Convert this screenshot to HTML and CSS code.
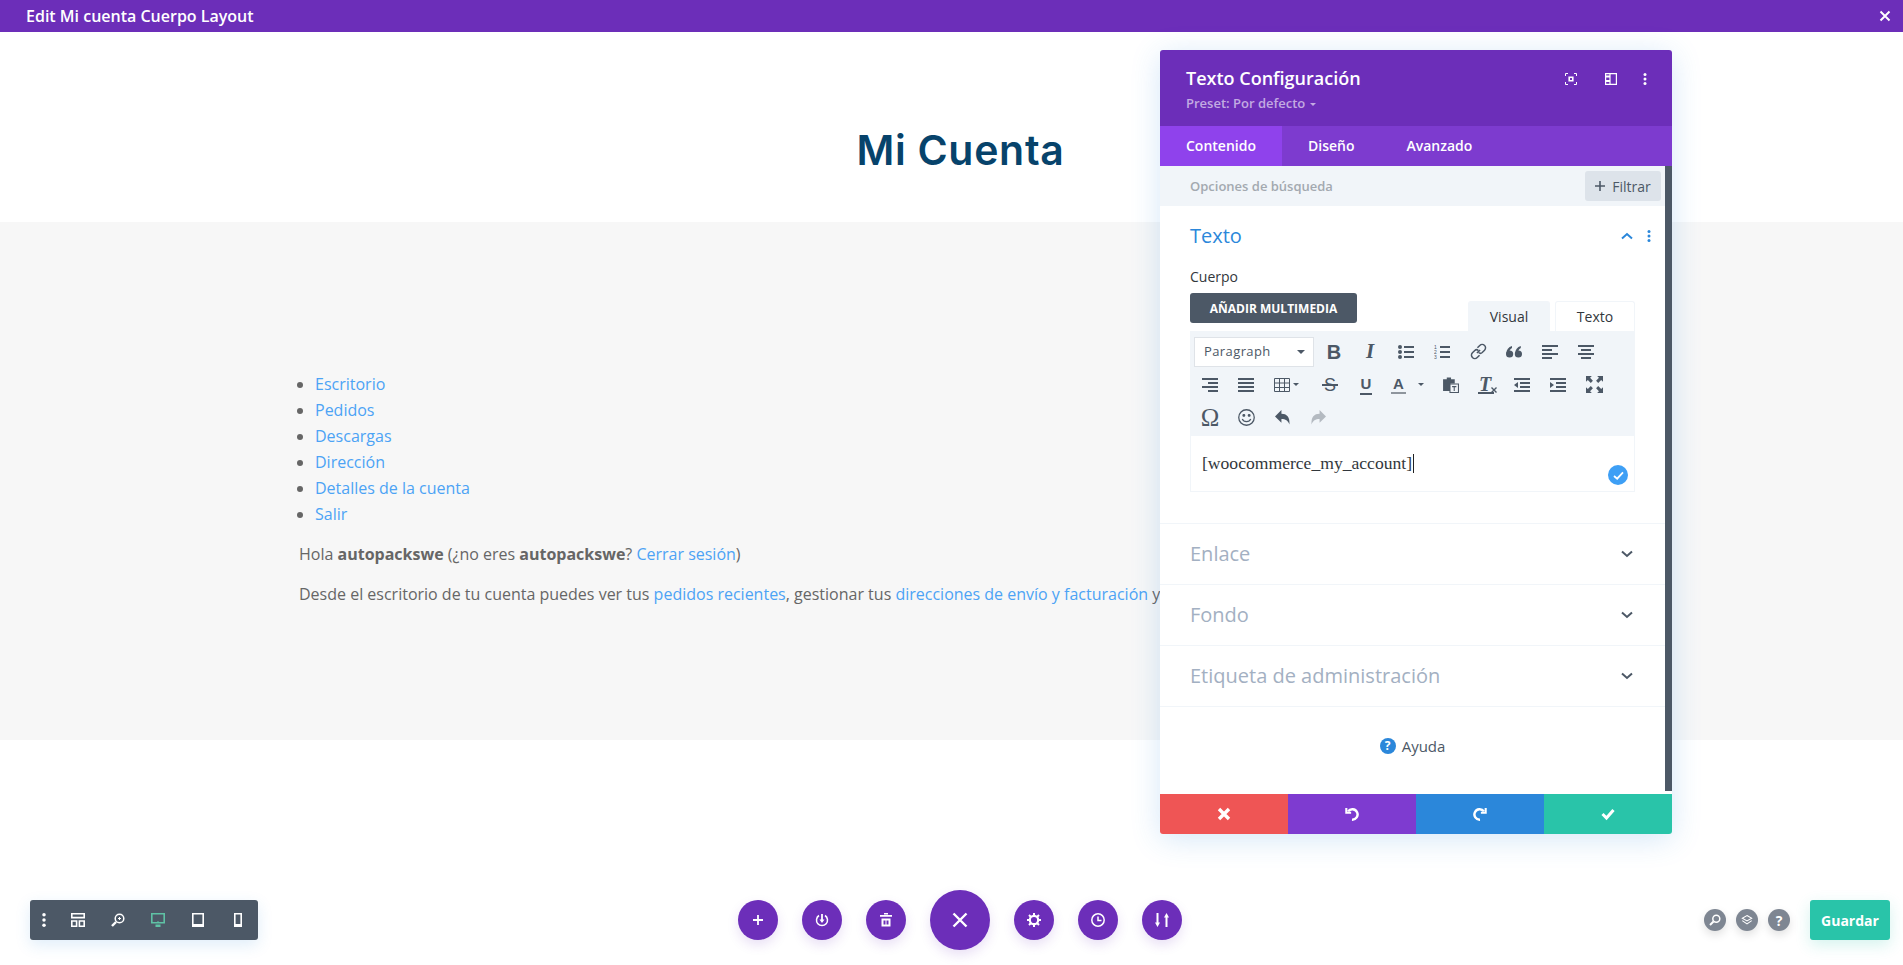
FILE: index.html
```html
<!doctype html>
<html lang="es">
<head>
<meta charset="utf-8">
<title>Edit Mi cuenta Cuerpo Layout</title>
<link rel="stylesheet" href="styles.css">
</head>
<body>

<svg class="sprite" xmlns="http://www.w3.org/2000/svg">
	<symbol id="i-dots" viewBox="0 0 16 16"><circle cx="8" cy="2" r="2"/><circle cx="8" cy="8" r="2"/><circle cx="8" cy="14" r="2"/></symbol>
	<symbol id="i-chev" viewBox="0 0 12 8"><path d="M1 1.500l5 4.500 5-4.500" fill="none" stroke="currentColor" stroke-width="2"/></symbol>
	<symbol id="i-close" viewBox="0 0 16 16"><path d="M2 2l12 12M14 2L2 14" fill="none" stroke="currentColor" stroke-width="2.600"/></symbol>
</svg>

<header class="topbar">
	<span class="topbar-title">Edit Mi cuenta Cuerpo Layout</span>
	<svg class="topbar-close"><use href="#i-close"/></svg>
</header>

<section class="hero"><h1>Mi Cuenta</h1></section>

<section class="account">
	<ul class="account-nav">
		<li><a href="#">Escritorio</a></li>
		<li><a href="#">Pedidos</a></li>
		<li><a href="#">Descargas</a></li>
		<li><a href="#">Dirección</a></li>
		<li><a href="#">Detalles de la cuenta</a></li>
		<li><a href="#">Salir</a></li>
	</ul>
	<p>Hola <b>autopackswe</b> (¿no eres <b>autopackswe</b>? <a href="#">Cerrar sesión</a>)</p>
	<p>Desde el escritorio de tu cuenta puedes ver tus <a href="#">pedidos recientes</a>, gestionar tus <a href="#">direcciones de envío y facturación</a> y</p>
</section>

<!-- settings modal -->
<div class="modal">
	<div class="modal-head">
		<div>
			<div class="modal-title">Texto Configuración</div>
			<div class="modal-preset">Preset: Por defecto <i class="caret caret-light"></i></div>
		</div>
		<div class="modal-tools">
			<svg viewBox="0 0 12 12"><path d="M.5 3V.5H3M9 .5h2.500V3M11.500 9v2.500H9M3 11.500H.5V9" fill="none" stroke="#fff" stroke-width="1"/><path d="M4.200 4.200h3.600v3.600H4.200z" fill="none" stroke="#fff" stroke-width="1.600"/></svg>
			<svg viewBox="0 0 12 12"><path d="M.6.600h10.800v10.800H.6zM5 .6v10.800" fill="none" stroke="#fff" stroke-width="1.200"/><path d="M1 2.500h4v2H1zM1 7h4v2H1z" fill="#fff"/></svg>
			<svg class="tool-dots" fill="#fff"><use href="#i-dots"/></svg>
		</div>
	</div>

	<div class="modal-tabs">
		<span class="tab active">Contenido</span>
		<span class="tab">Diseño</span>
		<span class="tab">Avanzado</span>
	</div>

	<div class="modal-search">
		<span class="search-label">Opciones de búsqueda</span>
		<span class="filter"><svg viewBox="0 0 10 10"><path d="M5 0v10M0 5h10" stroke="#4c5866" stroke-width="1.600"/></svg> Filtrar</span>
	</div>

	<div class="modal-body">
		<div class="group open">
			<div class="group-head">
				<span class="group-name">Texto</span>
				<svg class="chev up"><use href="#i-chev"/></svg>
				<svg class="group-dots"><use href="#i-dots"/></svg>
			</div>
			<div class="field-label">Cuerpo</div>
			<div class="editor-top">
				<span class="media-btn">AÑADIR MULTIMEDIA</span>
				<div class="editor-tabs">
					<span class="etab on">Visual</span>
					<span class="etab">Texto</span>
				</div>
			</div>
			<div class="toolbar">
				<span class="select">Paragraph <i class="caret"></i></span>

				<span class="tb tb-b">B</span>
				<span class="tb tb-i">I</span>
				<span class="tb"><svg viewBox="0 0 16 14"><circle cx="2" cy="2" r="2"/><circle cx="2" cy="7" r="2"/><circle cx="2" cy="12" r="2"/><path d="M6 1h10v2H6zM6 6h10v2H6zM6 11h10v2H6z"/></svg></span>
				<span class="tb"><svg viewBox="0 0 16 14"><text x="0" y="4.400" class="tiny">1</text><text x="0" y="9.200" class="tiny">2</text><text x="0" y="14" class="tiny">3</text><path d="M6 1h10v2H6zM6 6h10v2H6zM6 11h10v2H6z"/></svg></span>
				<span class="tb"><svg class="sq line" viewBox="0 0 16 16" stroke="#4c5866" stroke-width="1.400"><path d="M6.500 9.500l3-3M7 4.500l2.200-2.200a2.600 2.600 0 0 1 4.500 4.500L11.500 9a2.400 2.400 0 0 1-3.300 0M9 11.500l-2.200 2.200a2.600 2.600 0 0 1-4.500-4.500L4.500 7a2.400 2.400 0 0 1 3.300 0"/></svg></span>
				<span class="tb"><svg viewBox="0 0 16 12"><circle cx="3.600" cy="8" r="3.600"/><path d="M.4 7.500C.4 3.500 2.500 1 6 0v2C4 3 3 5 3.500 7z"/><circle cx="12.400" cy="8" r="3.600"/><path d="M9.200 7.500C9.200 3.500 11.300 1 14.800 0v2c-2 1-3 3-2.500 5z"/></svg></span>
				<span class="tb"><svg viewBox="0 0 16 14"><path d="M0 0h16v2H0zM0 4h10v2H0zM0 8h16v2H0zM0 12h10v2H0z"/></svg></span>
				<span class="tb"><svg viewBox="0 0 16 14"><path d="M0 0h16v2H0zM3 4h10v2H3zM0 8h16v2H0zM3 12h10v2H3z"/></svg></span>

				<span class="tb"><svg viewBox="0 0 16 14"><path d="M0 0h16v2H0zM6 4h10v2H6zM0 8h16v2H0zM6 12h10v2H6z"/></svg></span>
				<span class="tb"><svg viewBox="0 0 16 14"><path d="M0 0h16v2H0zM0 4h16v2H0zM0 8h16v2H0zM0 12h16v2H0z"/></svg></span>
				<span class="tb tb-wide"><svg class="line" viewBox="0 0 16 14"><path d="M.5.500h15v13H.5zM.5 5h15M.5 9.500h15M5.500.5v13M10.500.5v13" stroke="#4c5866"/></svg><i class="caret"></i></span>
				<span class="tb tb-s">S</span>
				<span class="tb tb-u">U</span>
				<span class="tb tb-wide tb-color"><span class="tb-a">A</span><i class="caret"></i></span>
				<span class="tb"><svg class="sq" viewBox="0 0 16 16"><path d="M1 3h3.500V1.500h4V3H12v4H8v7H1z"/><path d="M7.500 7.500h8v8h-8z" fill="#f1f5f9" stroke="#4c5866"/><path d="M9.500 9.500h4v1h-1.500v3.500h-1v-3.500H9.500z"/></svg></span>
				<span class="tb tb-clear"><span>T</span><svg viewBox="0 0 6 6"><path d="M.5.500l5 5M5.500.5l-5 5" fill="none" stroke="#4c5866" stroke-width="1.400"/></svg></span>
				<span class="tb"><svg viewBox="0 0 16 14"><path d="M0 0h16v2H0zM6 4h10v2H6zM6 8h10v2H6zM0 12h16v2H0zM4 4v6L0 7z"/></svg></span>
				<span class="tb"><svg viewBox="0 0 16 14"><path d="M0 0h16v2H0zM6 4h10v2H6zM6 8h10v2H6zM0 12h16v2H0zM0 4v6l4-3z"/></svg></span>
				<span class="tb"><svg class="sq" viewBox="0 0 16 16"><path d="M0 0h5.500L3.800 1.700 6.500 4.500 4.500 6.500 1.700 3.800 0 5.500zM16 0v5.500l-1.700-1.700-2.800 2.700-2-2 2.700-2.800L10.500 0zM0 16v-5.500l1.700 1.700 2.800-2.700 2 2-2.700 2.800L5.500 16zM16 16h-5.500l1.700-1.700-2.700-2.800 2-2 2.800 2.700 1.700-1.700z"/></svg></span>

				<span class="tb tb-omega">Ω</span>
				<span class="tb"><svg class="sq line" viewBox="0 0 16 16" stroke="#4c5866" stroke-width="1.200"><circle cx="8" cy="8" r="7.300"/><path d="M4 9.500c1.500 3.300 6.500 3.300 8 0"/><circle cx="5.500" cy="6" r=".8" fill="#4c5866"/><circle cx="10.500" cy="6" r=".8" fill="#4c5866"/></svg></span>
				<span class="tb"><svg class="sm" viewBox="0 0 14 14"><path d="M6 0v3.500c5 0 8 3 7.500 10C12 10 10 8.500 6 8.500V12L0 6z"/></svg></span>
				<span class="tb tb-off"><svg class="sm" viewBox="0 0 14 14"><path d="M8 0v3.500c-5 0-8 3-7.500 10C2 10 4 8.500 8 8.500V12l6-6z"/></svg></span>
			</div>
			<div class="editor-area">
				<span class="code">[woocommerce_my_account]</span><span class="cursor"></span>
				<span class="saved"><svg viewBox="0 0 12 10"><path d="M1 5.500l3.500 3L11 1.500" fill="none" stroke="#fff" stroke-width="2"/></svg></span>
			</div>
		</div>

		<div class="group">
			<span class="group-name">Enlace</span>
			<svg class="chev"><use href="#i-chev"/></svg>
		</div>
		<div class="group">
			<span class="group-name">Fondo</span>
			<svg class="chev"><use href="#i-chev"/></svg>
		</div>
		<div class="group">
			<span class="group-name">Etiqueta de administración</span>
			<svg class="chev"><use href="#i-chev"/></svg>
		</div>

		<div class="help"><span class="help-mark">?</span> Ayuda</div>
	</div>
	<div class="scrollbar"></div>

	<div class="modal-foot">
		<span class="fbtn f-red"><svg viewBox="0 0 14 14"><path d="M2 2l10 10M12 2L2 12" fill="none" stroke="#fff" stroke-width="3.400"/></svg></span>
		<span class="fbtn f-purple"><svg viewBox="0 0 16 16" fill="none" stroke="#fff" stroke-width="2.800"><path d="M3.500 5A6 6 0 1 1 8 14.500"/><path d="M1.500 1v5.500H7" stroke-width="2.400"/></svg></span>
		<span class="fbtn f-blue"><svg viewBox="0 0 16 16" fill="none" stroke="#fff" stroke-width="2.800"><path d="M12.500 5A6 6 0 1 0 8 14.500"/><path d="M14.500 1v5.500H9" stroke-width="2.400"/></svg></span>
		<span class="fbtn f-green"><svg viewBox="0 0 14 12"><path d="M1.500 6l4 4L12.500 2" fill="none" stroke="#fff" stroke-width="3"/></svg></span>
	</div>
</div>

<!-- bottom left: view modes -->
<div class="views">
	<span class="view view-dots"><svg fill="#fff"><use href="#i-dots"/></svg></span>
	<span class="view"><svg viewBox="0 0 14 14"><path d="M.8.800h12.400v3.800H.8zM.8 8h4.800v5.200H.8zM8.400 8h4.800v5.200H8.400z" fill="none" stroke="#fff" stroke-width="1.600"/></svg></span>
	<span class="view"><svg viewBox="0 0 14 14"><circle cx="8.500" cy="5.500" r="4.300" fill="none" stroke="#fff" stroke-width="1.500"/><path d="M5 9l-4 4" stroke="#fff" stroke-width="2.400"/><path d="M7 5.500h3M8.500 4v3" stroke="#fff"/></svg></span>
	<span class="view"><svg viewBox="0 0 14 14"><path d="M.8.800h12.400v9H.8z" fill="none" stroke="#5fc2a5" stroke-width="1.600"/><path d="M6 8.500h2v1H6zM4.500 11.500h5V14h-5z" fill="#5fc2a5"/></svg></span>
	<span class="view"><svg viewBox="0 0 12 14"><path d="M.8.800h10.400v12.400H.8z" fill="none" stroke="#fff" stroke-width="1.600"/><path d="M1 11h10v2H1z" fill="#fff"/></svg></span>
	<span class="view"><svg class="phone" viewBox="0 0 8 14"><path d="M.8.800h6.400v12.400H.8z" fill="none" stroke="#fff" stroke-width="1.600"/><path d="M1 11h6v2H1z" fill="#fff"/></svg></span>
</div>

<!-- bottom center: page actions -->
<div class="actions">
	<span class="round"><svg class="plus" viewBox="0 0 10 10"><path d="M5 0v10M0 5h10" stroke="#fff" stroke-width="1.800"/></svg></span>
	<span class="round"><svg viewBox="0 0 14 14" fill="none" stroke="#fff" stroke-width="1.500"><path d="M4 2.500a5.500 5.500 0 1 0 6 0"/><path d="M7 1v7.500" stroke-width="1.800"/><path d="M4.500 6.500L7 10l2.500-3.500z" fill="#fff" stroke="none"/></svg></span>
	<span class="round"><svg viewBox="0 0 12 14"><path d="M0 2h12v1.800H0zM4 0h4v1.500H4z" fill="#fff"/><path d="M1.500 5.500h9v8h-9z" fill="#fff"/><path d="M3.500 7.500h2v4h-2zM6.500 7.500h2v4h-2z" fill="#6c2eb9"/></svg></span>
	<span class="round round-big"><svg viewBox="0 0 16 16"><path d="M1.500 1.500l13 13M14.500 1.500l-13 13" stroke="#fff" stroke-width="2.400"/></svg></span>
	<span class="round"><svg viewBox="0 0 14 14"><circle cx="7" cy="7" r="4.200" fill="none" stroke="#fff" stroke-width="2.200"/><path d="M7 0v3M7 11v3M0 7h3M11 7h3M2 2l2 2M10 10l2 2M12 2l-2 2M4 10l-2 2" stroke="#fff" stroke-width="2"/></svg></span>
	<span class="round"><svg viewBox="0 0 14 14" fill="none" stroke="#fff" stroke-width="1.500"><circle cx="7" cy="7" r="6.200"/><path d="M7 3.500V7.500h3.500"/></svg></span>
	<span class="round"><svg viewBox="0 0 14 14"><path d="M2.500 10V0M11.500 14V4" stroke="#fff" stroke-width="2"/><path d="M0 9.500h5L2.500 14zM9 4.500h5L11.500 0z" fill="#fff"/></svg></span>
</div>

<!-- bottom right -->
<div class="savebar">
	<span class="mini"><svg viewBox="0 0 12 12"><circle cx="7.300" cy="4.700" r="3.500" fill="none" stroke="#fff" stroke-width="1.500"/><path d="M4.500 7.500L1 11" stroke="#fff" stroke-width="2"/></svg></span>
	<span class="mini"><svg viewBox="0 0 14 12" fill="none" stroke="#fff" stroke-width="1.200"><path d="M7 .8l5.500 3.200L7 7.200 1.500 4z"/><path d="M1.500 6.800L7 10.500l5.500-3.700"/></svg></span>
	<span class="mini mini-q">?</span>
	<span class="save">Guardar</span>
</div>

</body>
</html>
```

FILE: styles.css
```css
* { box-sizing: border-box; }

body { background: #fff; color: #666; font: 14px/1.5 "Open Sans", sans-serif; height: 965px; margin: 0; overflow: hidden; position: relative; }
a { color: #4ca3f5; text-decoration: none; }
svg { display: block; }

.sprite { height: 0; position: absolute; width: 0; }

.topbar { align-items: center; background: #6c2eb9; color: #fff; display: flex; height: 32px; justify-content: space-between; padding: 0 12px 0 26px; }
.topbar-title { font-size: 16px; font-weight: 600; }
.topbar-close { color: #fff; height: 12px; width: 12px; }

.hero { align-items: center; display: flex; height: 190px; justify-content: center; padding: 46px 0 0 18px; }
.hero h1 { color: #07436b; font: 600 41px/1 Inter, "Open Sans", sans-serif; letter-spacing: .7px; margin: 0; }

.account { background: #f7f7f7; font-size: 16px; height: 518px; line-height: 26px; padding: 149px 0 0 299px; white-space: nowrap; }
.account-nav { margin: 0 0 14px; padding: 0 0 0 16px; }
.account p { margin: 0 0 14px; }
.account b { font-weight: 700; }

/* settings modal */
.modal { background: #fff; border-radius: 3px; box-shadow: 0 5px 30px rgba(43, 135, 218, .2); display: flex; flex-direction: column; height: 784px; left: 1160px; overflow: hidden; position: absolute; top: 50px; width: 512px; }

.modal-head { align-items: flex-start; background: #6c2eb9; display: flex; flex: none; height: 76px; justify-content: space-between; padding: 15px 21px 0 26px; }
.modal-title { color: #fff; font-size: 18px; font-weight: 600; line-height: 27px; }
.modal-preset { color: rgba(255, 255, 255, .6); font-size: 13px; font-weight: 600; line-height: 18px; margin-top: 2px; }
.modal-tools { align-items: center; display: flex; gap: 28px; height: 27px; }
.modal-tools svg { height: 12px; width: 12px; }
.modal-tools .tool-dots { margin-left: -6px; }

.caret { border-left: 4px solid transparent; border-right: 4px solid transparent; border-top: 4px solid #4c5866; display: inline-block; vertical-align: middle; }
.caret-light { border-left-width: 3px; border-right-width: 3px; border-top: 3px solid rgba(255, 255, 255, .6); margin-left: 1px; }

.modal-tabs { background: #7d3bcf; color: #fff; display: flex; flex: none; font-size: 14px; font-weight: 600; height: 40px; }
.tab { align-items: center; display: flex; padding: 0 26px 2px; }
.tab.active { background: #8f42ec; }

.modal-search { align-items: center; background: #f1f5f9; color: #a3a9b0; display: flex; flex: none; font-size: 13px; font-weight: 600; height: 40px; justify-content: space-between; padding: 0 11px 0 30px; }
.search-label { padding-top: 1px; }
.filter { align-items: center; background: #dde3ea; border-radius: 3px; color: #4c5866; display: flex; font-size: 14px; font-weight: 400; gap: 7px; height: 30px; justify-content: center; width: 76px; }
.filter svg { height: 10px; width: 10px; }

.modal-body { flex: 1; }

.group { align-items: center; border-bottom: 1px solid #f1f5f9; display: flex; height: 61px; justify-content: space-between; padding: 0 39px 0 30px; }
.group.open { display: block; height: 318px; }
.group-head { align-items: center; display: flex; height: 59px; margin-bottom: 2px; }
.group-name { color: #a3b0c2; font-size: 20px; }
.group.open .group-name { color: #2b87da; }
.chev { color: #4c5866; height: 8px; width: 12px; }
.chev.up { color: #2b87da; margin-left: auto; transform: rotate(180deg); }
.group-dots { fill: #2b87da; height: 12px; margin: 0 -22px 0 10px; width: 12px; }

.field-label { color: #32373c; font-weight: 500; line-height: 20px; }
.editor-top { align-items: flex-end; display: flex; justify-content: space-between; margin: 6px -2px 0 0; }
.media-btn { align-items: center; background: #4c5866; border-radius: 3px; color: #fff; display: flex; font-size: 12px; font-weight: 700; height: 30px; justify-content: center; margin-bottom: 8px; padding-top: 1px; width: 167px; }
.editor-tabs { display: flex; gap: 5px; }
.etab { align-items: center; border: 1px solid #f1f5f9; border-bottom: 0; border-radius: 3px 3px 0 0; color: #32373c; display: flex; font-size: 14px; height: 30px; justify-content: center; width: 80px; }
.etab.on { background: #f1f5f9; width: 82px; }

.toolbar { align-content: flex-start; align-items: center; background: #f1f5f9; display: flex; flex-wrap: wrap; height: 105px; margin-right: -2px; padding: 4px 0 0 2px; }
.select { align-items: center; background: #fff; border: 1px solid #dfe3e8; color: #4c5866; display: flex; font-size: 13px; height: 30px; justify-content: space-between; letter-spacing: .4px; margin: 0 2px; padding: 0 8px 0 9px; width: 120px; }
.tb { align-items: center; color: #4c5866; display: flex; height: 33px; justify-content: center; position: relative; width: 36px; }
.tb svg { fill: #4c5866; height: 14px; width: 16px; }
.tb svg.sq { height: 17px; width: 17px; }
.tb svg.sm { height: 15px; width: 15px; }
.tb svg.line { fill: none; }
.tb-wide { gap: 3px; justify-content: flex-start; padding-left: 10px; width: 48px; }
.tb-wide .caret { border-left-width: 3.500px; border-right-width: 3.500px; border-top-width: 3.500px; }
.tb-b { font: 700 20px/1 "Liberation Sans", sans-serif; }
.tb-i { font: italic 700 21px/1 "Liberation Serif", serif; }
.tb-s { font: 400 18px/1 "Liberation Sans", sans-serif; }
.tb-s::after { background: #4c5866; content: ""; height: 1.500px; left: 10px; position: absolute; right: 10px; top: 16px; }
.tb-u { font: 700 15px/1 "Liberation Sans", sans-serif; padding-bottom: 3px; }
.tb-u::after { background: #4c5866; bottom: 6px; content: ""; height: 2px; left: 12px; position: absolute; right: 12px; }
.tb-color { gap: 12px; padding-left: 7px; }
.tb-a { border-bottom: 2px solid #8e959d; font: 700 15px/16px "Liberation Sans", sans-serif; padding: 0 2px; }
.tb-clear span { border-bottom: 2px solid #4c5866; font: italic 700 20px/16px "Liberation Serif", serif; padding: 0 3px 0 1px; }
.tb-clear svg { bottom: 8px; height: 6px; left: 23px; position: absolute; width: 6px; }
.tb-omega { font: 400 25px/1 "Liberation Serif", serif; }
.tb-off svg { fill: #b4bac1; }
.tiny { fill: #4c5866; font: 400 5px "Liberation Sans", sans-serif; }

.editor-area { align-items: center; border: 1px solid #f1f5f9; border-top: 0; color: #32373c; display: flex; font: 17.600px/1 "Liberation Serif", serif; height: 56px; margin-right: -2px; padding-left: 11px; position: relative; }
.cursor { background: #222; display: inline-block; height: 19px; margin-left: 1px; width: 1px; }
.saved { align-items: center; background: #3e9ff5; border-radius: 50%; bottom: 6px; display: flex; height: 20px; justify-content: center; position: absolute; right: 6px; width: 20px; }
.saved svg { height: 9px; width: 11px; }

.help { align-items: center; color: #4c5866; display: flex; font-size: 15px; gap: 6px; justify-content: center; padding: 28px 7px 0 0; }
.help-mark { background: #2b87da; border-radius: 50%; color: #fff; font-size: 12px; font-weight: 700; height: 16px; line-height: 16px; text-align: center; width: 16px; }

.scrollbar { background: #4c5866; bottom: 43px; position: absolute; right: 0; top: 116px; width: 7px; }

.modal-foot { display: flex; flex: none; height: 40px; }
.fbtn { align-items: center; display: flex; flex: 1; justify-content: center; }
.fbtn svg { height: 14px; width: 14px; }
.f-red { background: #ef5555; }
.f-purple { background: #7e3bd0; }
.f-blue { background: #2b87da; }
.f-green { background: #29c4a9; }

/* bottom bars */
.views { align-items: center; background: #4c5866; border-radius: 3px; box-shadow: 0 5px 15px rgba(43, 135, 218, .15); display: flex; height: 40px; left: 30px; position: absolute; top: 900px; width: 228px; }
.view { align-items: center; display: flex; height: 40px; justify-content: center; width: 40px; }
.view svg { height: 14px; width: 14px; }
.view .phone { width: 8px; }
.view-dots { width: 28px; }

.actions { align-items: center; display: flex; gap: 24px; left: 738px; position: absolute; top: 890px; }
.round { align-items: center; background: #6c2eb9; border-radius: 50%; box-shadow: 0 5px 12px rgba(108, 46, 185, .15); display: flex; height: 40px; justify-content: center; width: 40px; }
.round svg { height: 14px; width: 14px; }
.round .plus { height: 10px; width: 10px; }
.round-big { height: 60px; width: 60px; }
.round-big svg { height: 16px; width: 16px; }

.savebar { align-items: center; display: flex; gap: 10px; left: 1704px; position: absolute; top: 900px; }
.mini { align-items: center; background: #7e8692; border-radius: 50%; box-shadow: 0 4px 10px rgba(0, 0, 0, .12); color: #fff; display: flex; font-size: 14px; font-weight: 700; height: 22px; justify-content: center; width: 22px; }
.mini svg { height: 12px; width: 12px; }
.save { align-items: center; background: #29c4a9; border-radius: 3px; box-shadow: 0 5px 15px rgba(41, 196, 169, .2); color: #fff; display: flex; font-size: 14px; font-weight: 700; height: 40px; justify-content: center; margin-left: 10px; width: 80px; }
```
